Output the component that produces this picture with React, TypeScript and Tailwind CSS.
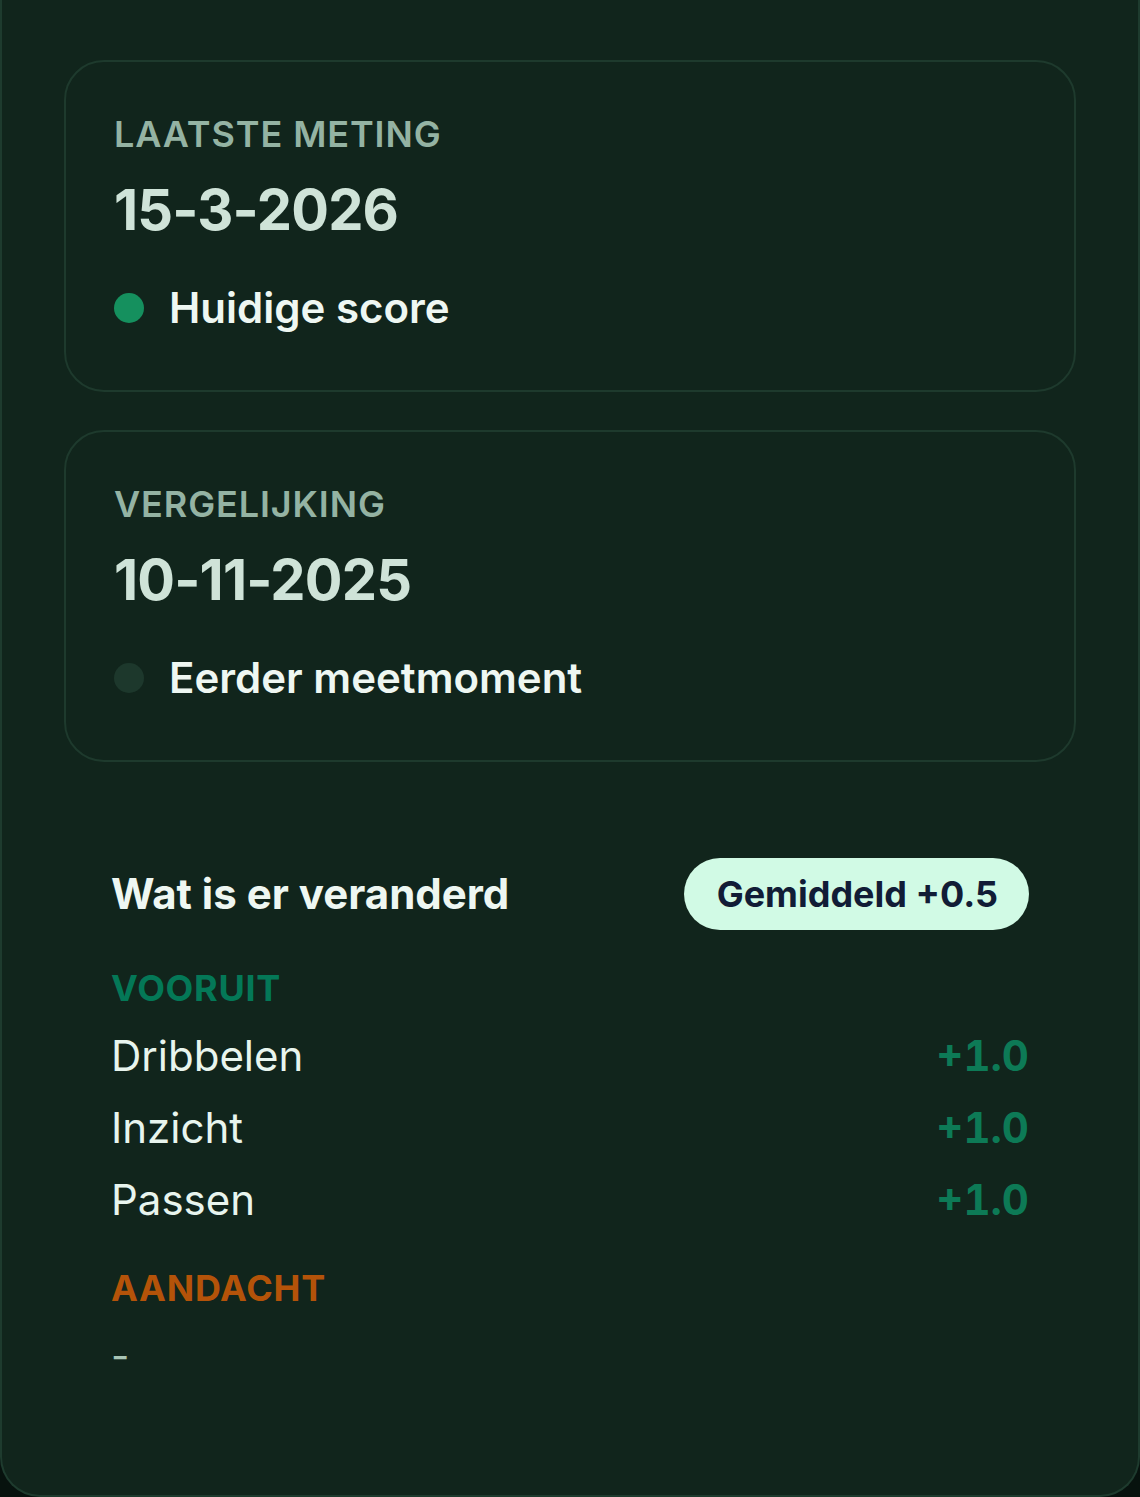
const changes = [
  { name: "Dribbelen", delta: "+1.0" },
  { name: "Inzicht", delta: "+1.0" },
  { name: "Passen", delta: "+1.0" },
];

function MeasureCard({
  label,
  date,
  caption,
  dotClass,
}: {
  label: string;
  date: string;
  caption: string;
  dotClass: string;
}) {
  return (
    <div className="rounded-[40px] border-2 border-[#1e3a2d] px-[48px] pt-[50px] pb-[58px]">
      <div className="text-[36px] leading-[44px] font-semibold uppercase tracking-[0.025em] text-[#94b3a3]">
        {label}
      </div>
      <div className="mt-[20px] text-[56px] leading-[68px] font-bold tracking-[-0.015em] text-[#cfe3d8]">
        {date}
      </div>
      <div className="mt-[40px] flex items-center gap-[25px]">
        <span className={`h-[30px] w-[30px] rounded-full ${dotClass}`} />
        <span className="text-[42px] leading-[48px] font-semibold text-[#eef7f2]">{caption}</span>
      </div>
    </div>
  );
}

export default function App() {
  return (
    <div
      className="min-h-[1497px] bg-[#07120e]"
      style={{ fontFamily: "Inter, 'Noto Sans', sans-serif" }}
    >
      <div className="h-[1497px] rounded-b-[40px] border-x-2 border-b-2 border-[#1e3b2e] bg-[#11251c] px-[62px] pt-[60px]">
        <div className="flex flex-col gap-[38px]">
          <MeasureCard
            label="Laatste meting"
            date="15-3-2026"
            caption="Huidige score"
            dotClass="bg-[#15905e]"
          />
          <MeasureCard
            label="Vergelijking"
            date="10-11-2025"
            caption="Eerder meetmoment"
            dotClass="bg-[#1d382c]"
          />
        </div>

        <div className="mt-[96px] pl-[47px] pr-[47px]">
          <div className="flex h-[72px] items-center justify-between">
            <h2 className="text-[42px] leading-[48px] font-bold text-[#eef7f2]">Wat is er veranderd</h2>
            <span className="flex h-[72px] items-center rounded-full bg-[#d1fae5] pl-[33px] pr-[31px] text-[36px] font-bold text-[#111c36]">
              Gemiddeld +0.5
            </span>
          </div>

          <div className="mt-[36px] text-[36px] leading-[44px] font-bold uppercase tracking-[0.02em] text-[#047857]">
            Vooruit
          </div>
          <div className="mt-[22px] flex flex-col gap-[24px]">
            {changes.map((c) => (
              <div key={c.name} className="flex items-center justify-between text-[42px] leading-[48px]">
                <span className="text-[#e8f5ee]">{c.name}</span>
                <span className="font-bold tabular-nums text-[#0d7a56]">{c.delta}</span>
              </div>
            ))}
          </div>

          <div className="mt-[42px] text-[36px] leading-[44px] font-bold uppercase tracking-[0.02em] text-[#b45309]">
            Aandacht
          </div>
          <div className="mt-[22px] text-[40px] leading-[48px] text-[#a8c5b5]">-</div>
        </div>
      </div>
    </div>
  );
}
